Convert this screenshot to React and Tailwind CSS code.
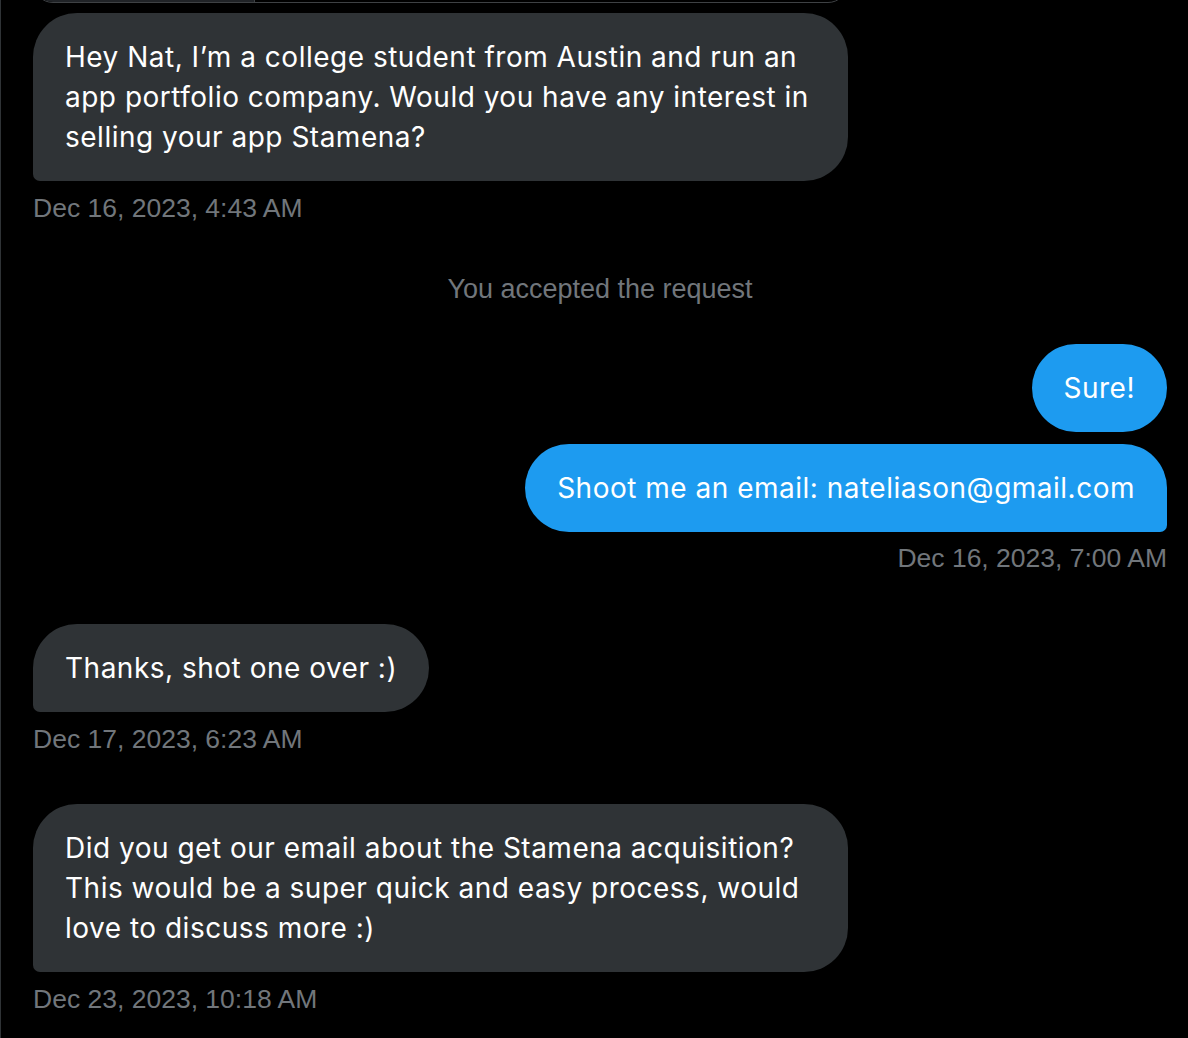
export default function App() {
  const bubbleFont = { fontFamily: "Inter, 'Liberation Sans', sans-serif" };
  return (
    <div className="min-h-[1038px] w-[1188px] overflow-hidden bg-black border-l border-[#2f3336] pl-[32px] pr-[21px] font-['Liberation_Sans',sans-serif]">
      {/* bottom of link preview card */}
      <div className="mt-[-37px] flex h-[40px] w-[815px] overflow-hidden rounded-[29px] border border-[#3e4144]">
        <div className="w-[221px] bg-[#202327] border-r border-[#3e4144]" />
        <div className="flex-1" />
      </div>

      <div className="mt-[10px] flex flex-col items-start">
        <div
          className="w-[815px] whitespace-nowrap rounded-[44px] rounded-bl-[7px] bg-[#2f3336] px-[32px] py-[24px] text-[28px] leading-[40px] tracking-[0.5px] text-white"
          style={bubbleFont}
        >
          Hey Nat, I’m a college student from Austin and run an
          <br />
          app portfolio company. Would you have any interest in
          <br />
          selling your app Stamena?
        </div>
        <div className="mt-[12px] text-[26.5px] leading-[30px] text-[#71767b]">
          Dec 16, 2023, 4:43 AM
        </div>
      </div>

      <div className="mt-[51px] text-center text-[27px] leading-[30px] text-[#71767b]">
        You accepted the request
      </div>

      <div className="mt-[40px] flex flex-col items-end gap-[12px]">
        <div
          className="rounded-[44px] bg-[#1d9bf0] px-[32px] py-[24px] text-[28px] leading-[40px] tracking-[0.5px] text-white"
          style={bubbleFont}
        >
          Sure!
        </div>
        <div
          className="rounded-[44px] rounded-br-[7px] bg-[#1d9bf0] px-[32px] py-[24px] text-[28px] leading-[40px] tracking-[0.5px] text-white"
          style={bubbleFont}
        >
          Shoot me an email: nateliason@gmail.com
        </div>
      </div>
      <div className="mt-[11px] text-right text-[26.5px] leading-[30px] text-[#71767b]">
        Dec 16, 2023, 7:00 AM
      </div>

      <div className="mt-[51px] flex flex-col items-start">
        <div
          className="rounded-[44px] rounded-bl-[7px] bg-[#2f3336] px-[32px] py-[24px] text-[28px] leading-[40px] tracking-[0.5px] text-white"
          style={bubbleFont}
        >
          Thanks, shot one over :)
        </div>
        <div className="mt-[12px] text-[26.5px] leading-[30px] text-[#71767b]">
          Dec 17, 2023, 6:23 AM
        </div>
      </div>

      <div className="mt-[50px] flex flex-col items-start">
        <div
          className="w-[815px] whitespace-nowrap rounded-[44px] rounded-bl-[7px] bg-[#2f3336] px-[32px] py-[24px] text-[28px] leading-[40px] tracking-[0.5px] text-white"
          style={bubbleFont}
        >
          Did you get our email about the Stamena acquisition?
          <br />
          This would be a super quick and easy process, would
          <br />
          love to discuss more :)
        </div>
        <div className="mt-[12px] text-[26.5px] leading-[30px] text-[#71767b]">
          Dec 23, 2023, 10:18 AM
        </div>
      </div>
    </div>
  );
}
